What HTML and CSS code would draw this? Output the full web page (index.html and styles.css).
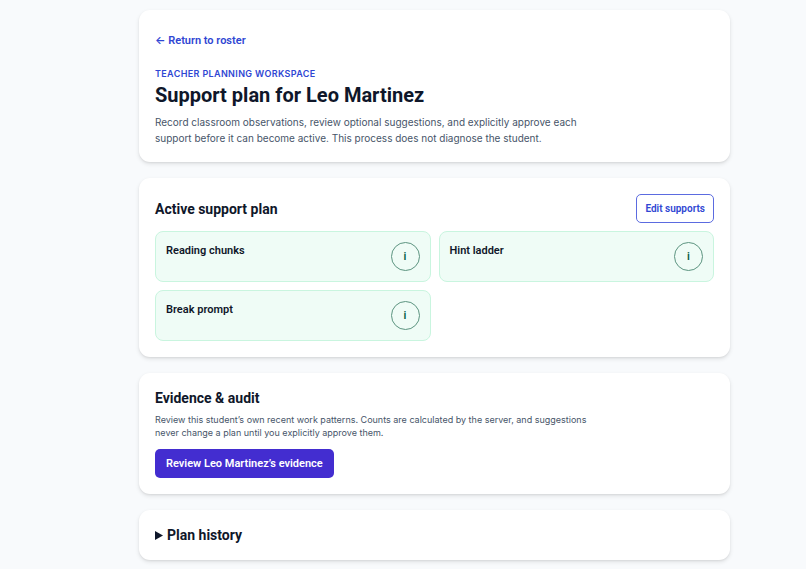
FILE: index.html
```html
<!DOCTYPE html>
<html lang="en">
<head>
    <meta charset="UTF-8">
    <meta name="viewport" content="width=device-width, initial-scale=1">
    <title>Support plan for Leo Martinez</title>
    <link rel="stylesheet" href="styles.css">
</head>
<body>
    <main class="workspace">
        <header class="card">
            <a class="back-link" href="#">← Return to roster</a>
            <p class="eyebrow">Teacher planning workspace</p>
            <h1 class="page-title">Support plan for Leo Martinez</h1>
            <p class="intro">Record classroom observations, review optional suggestions, and explicitly approve each support before it can become active. This process does not diagnose the student.</p>
        </header>

        <section class="card">
            <div class="card-header">
                <h2 class="card-title">Active support plan</h2>
                <button class="edit-button" type="button">Edit supports</button>
            </div>
            <ul class="support-grid">
                <li class="support">
                    <h3 class="support-name">Reading chunks</h3>
                    <button class="info-button" type="button" aria-label="About reading chunks">i</button>
                </li>
                <li class="support">
                    <h3 class="support-name">Hint ladder</h3>
                    <button class="info-button" type="button" aria-label="About hint ladder">i</button>
                </li>
                <li class="support">
                    <h3 class="support-name">Break prompt</h3>
                    <button class="info-button" type="button" aria-label="About break prompt">i</button>
                </li>
            </ul>
        </section>

        <section class="card">
            <h2 class="card-title">Evidence &amp; audit</h2>
            <p class="note">Review this student’s own recent work patterns. Counts are calculated by the server, and suggestions never change a plan until you explicitly approve them.</p>
            <button class="primary-button" type="button">Review Leo Martinez’s evidence</button>
        </section>

        <details class="card">
            <summary class="card-title history-toggle">
                <svg class="marker" viewBox="0 0 8 9" aria-hidden="true"><path d="M0 0L8 4.5L0 9Z" fill="currentColor"/></svg>
                Plan history
            </summary>
        </details>
    </main>
</body>
</html>
```

FILE: styles.css
```css
* {
    box-sizing: border-box;
}

body {
    margin: 0;
    background: #f8fafc;
    color: #0f172a;
    font-family: Roboto, Inter, "Liberation Sans", sans-serif;
    font-size: 11px;
    line-height: 16px;
}

h1, h2, h3, p, ul {
    margin: 0;
    padding: 0;
}

p {
    font-family: Inter, "Liberation Sans", sans-serif;
}

button {
    font: inherit;
    font-weight: 600;
    cursor: pointer;
}

.workspace {
    display: flex;
    flex-direction: column;
    gap: 16px;
    padding: 10px 76px 9px 139px;
}

.card {
    padding: 16px;
    border-radius: 11px;
    background: #fff;
    box-shadow: 0 2px 4px rgba(0, 0, 0, 0.1), 0 1px 2px rgba(0, 0, 0, 0.06);
}

/* Page header */
.back-link {
    display: inline-flex;
    align-items: center;
    min-height: 30px;
    color: #2f46d3;
    font-weight: 600;
    text-decoration: none;
}

.eyebrow {
    margin-top: 10px;
    color: #2f46d3;
    font-size: 9px;
    font-weight: 600;
    letter-spacing: 0.04em;
    text-transform: uppercase;
}

.page-title {
    margin-top: 1px;
    font-size: 20px;
    font-weight: 700;
    line-height: 24px;
}

.intro {
    max-width: 444px;
    margin-top: 7px;
    color: #475569;
    font-size: 10px;
}

/* Active supports */
.card-header {
    display: flex;
    align-items: center;
    justify-content: space-between;
    gap: 8px;
}

.card-title {
    font-size: 14px;
    font-weight: 700;
    line-height: 18px;
}

.edit-button {
    height: 29px;
    padding: 0 8px;
    border: 1px solid #5b6be0;
    border-radius: 5px;
    background: #fff;
    color: #2f46d3;
    font-size: 10px;
}

.support-grid {
    display: grid;
    grid-template-columns: 1fr 1fr;
    gap: 8px;
    margin-top: 8px;
    list-style: none;
}

.support {
    display: flex;
    align-items: flex-start;
    justify-content: space-between;
    padding: 10px;
    border: 1px solid #c9f5df;
    border-radius: 8px;
    background: #effcf6;
}

.support-name {
    font-size: 11px;
    font-weight: 600;
    line-height: 18px;
}

.info-button {
    width: 29px;
    height: 29px;
    padding: 0;
    border: 1px solid #5c9480;
    border-radius: 50%;
    background: transparent;
    color: #065f46;
}

/* Evidence */
.note {
    max-width: 444px;
    margin-top: 6px;
    color: #475569;
    font-size: 9px;
    line-height: 13px;
}

.primary-button {
    height: 29px;
    margin-top: 10px;
    padding: 0 11px;
    border: 0;
    border-radius: 5px;
    background: #432dd0;
    color: #fff;
}

.history-toggle {
    display: flex;
    align-items: center;
    gap: 4px;
    list-style: none;
    cursor: pointer;
}

.marker {
    width: 8px;
    height: 9px;
}
```
